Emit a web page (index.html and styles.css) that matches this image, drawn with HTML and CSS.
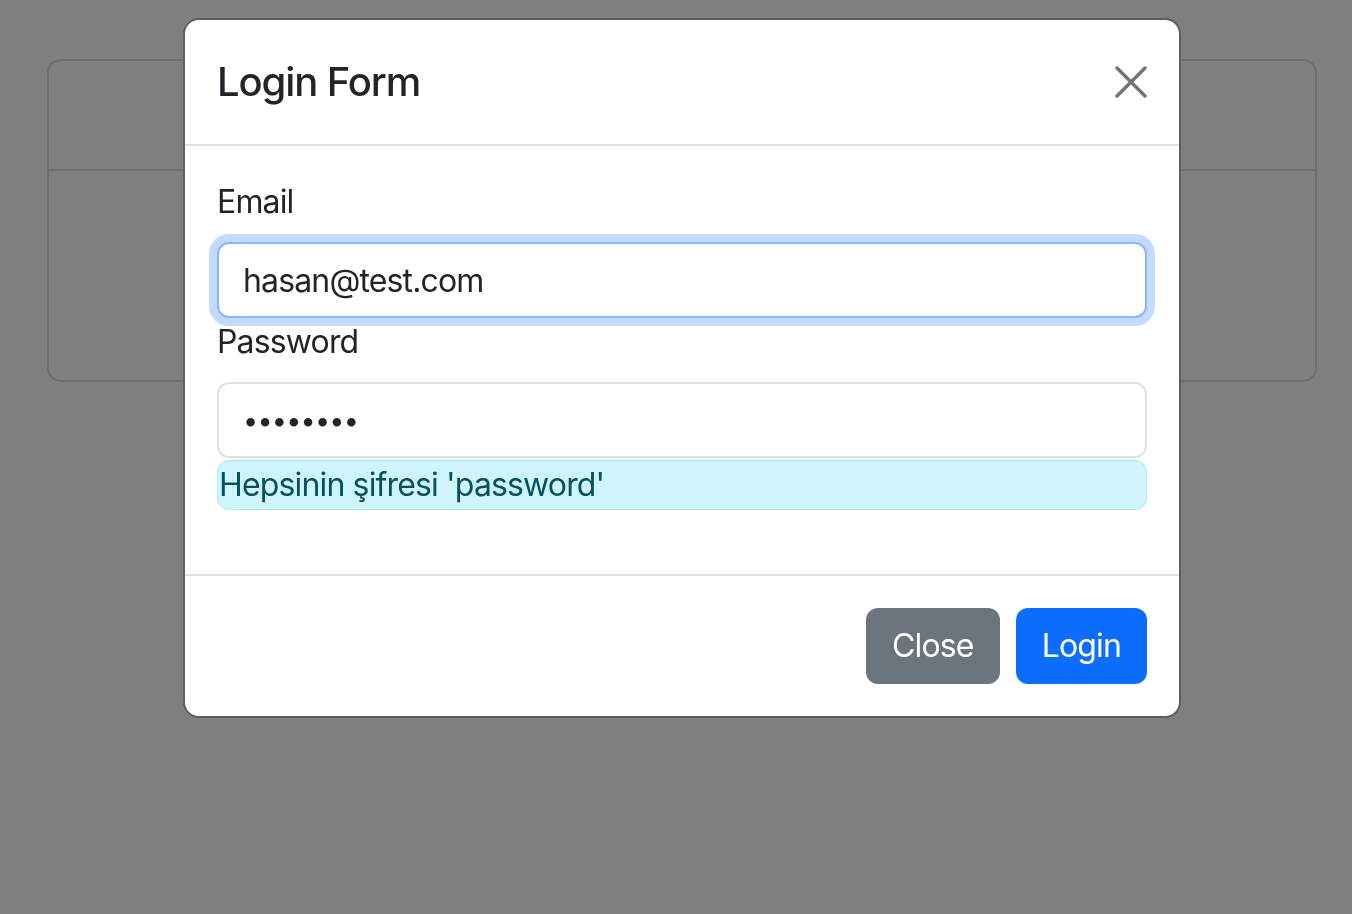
FILE: index.html
```html
<!DOCTYPE html>
<html lang="tr">
<head>
<meta charset="utf-8">
<title>Login Form</title>
<link rel="stylesheet" href="styles.css">
</head>
<body>
<div class="page">
  <div class="card">
    <div class="card-header"></div>
    <div class="card-body"></div>
  </div>
</div>
<div class="backdrop"></div>
<div class="modal">
  <div class="modal-dialog">
    <div class="modal-header">
      <h5 class="modal-title">Login Form</h5>
      <button class="btn-close" type="button" aria-label="Close">
        <svg viewBox="0 0 32 32" width="32" height="32"><path d="M2 2L30 30M30 2L2 30" stroke="currentColor" stroke-width="3.4" stroke-linecap="round" fill="none"/></svg>
      </button>
    </div>
    <div class="modal-body">
      <label class="form-label">Email</label>
      <input class="form-control is-focused" type="email" value="hasan@test.com">
      <label class="form-label">Password</label>
      <input class="form-control is-password" type="password" value="password">
      <div class="alert-info">Hepsinin şifresi 'password'</div>
    </div>
    <div class="modal-footer">
      <button class="btn btn-secondary" type="button">Close</button>
      <button class="btn btn-primary" type="button">Login</button>
    </div>
  </div>
</div>
</body>
</html>
```
FILE: styles.css
```css
html, body {
  margin: 0;
  padding: 0;
}
body {
  background: #ffffff;
  font-family: Inter, "Liberation Sans", Arial, sans-serif;
  color: #212529;
  width: 1352px;
  height: 914px;
  overflow: hidden;
}
.page {
  padding: 59px 35px 0 47px;
}
.card {
  border: 2px solid #dcdcdc;
  border-radius: 14px;
  height: 319px;
  display: flex;
  flex-direction: column;
}
.card-header {
  height: 108px;
  border-bottom: 2px solid #dcdcdc;
}
.card-body {
  flex: 1;
}
.backdrop {
  position: fixed;
  inset: 0;
  background: rgba(0, 0, 0, 0.5);
}
.modal {
  position: fixed;
  inset: 0;
}
.modal-dialog {
  margin: 18px 0 0 183px;
  background: #fff;
  border: 2px solid #5f5f5f;
  border-radius: 16px;
  box-sizing: border-box;
  width: 998px;
  overflow: hidden;
}
.modal-header {
  display: flex;
  align-items: center;
  justify-content: space-between;
  padding: 32px;
  border-bottom: 2px solid #dee2e6;
}
.modal-title {
  margin: 0;
  font-size: 40px;
  line-height: 60px;
  font-weight: 500;
  color: #212529;
  letter-spacing: -1.1px;
}
.btn-close {
  background: none;
  border: 0;
  padding: 0;
  width: 32px;
  height: 32px;
  color: #737373;
  display: flex;
}
.modal-body {
  padding: 32px;
  display: flex;
  flex-direction: column;
}
.form-label {
  font-size: 32px;
  line-height: 48px;
  margin-bottom: 16px;
  color: #212529;
  letter-spacing: -0.85px;
}
.form-control {
  display: block;
  box-sizing: border-box;
  width: 100%;
  height: 76px;
  padding: 12px 24px;
  font-family: inherit;
  font-size: 32px;
  line-height: 48px;
  letter-spacing: -0.85px;
  color: #212529;
  background: #fff;
  border: 2px solid #dee2e6;
  border-radius: 12px;
  outline: none;
}
.form-control.is-password {
  font-size: 27px;
  letter-spacing: -0.8px;
}
.form-control.is-focused {
  border-color: #86b7fe;
  box-shadow: 0 0 0 8px #c2dbfe;
}
.alert-info {
  margin-top: 2px;
  margin-bottom: 32px;
  padding: 0 0 0 1px;
  font-size: 32px;
  line-height: 48px;
  letter-spacing: -0.85px;
  color: #055160;
  background: #cff4fc;
  border: 1px solid #a6e9f8;
  border-radius: 12px;
}
.modal-footer {
  display: flex;
  justify-content: flex-end;
  gap: 16px;
  padding: 32px;
  border-top: 2px solid #dee2e6;
}
.btn {
  font-family: inherit;
  font-size: 32px;
  line-height: 48px;
  letter-spacing: -0.85px;
  height: 76px;
  padding: 12px 26px;
  border: 0;
  border-radius: 12px;
  color: #fff;
}
.btn-secondary {
  background: #6c757d;
}
.btn-primary {
  background: #0d6efd;
}
```
